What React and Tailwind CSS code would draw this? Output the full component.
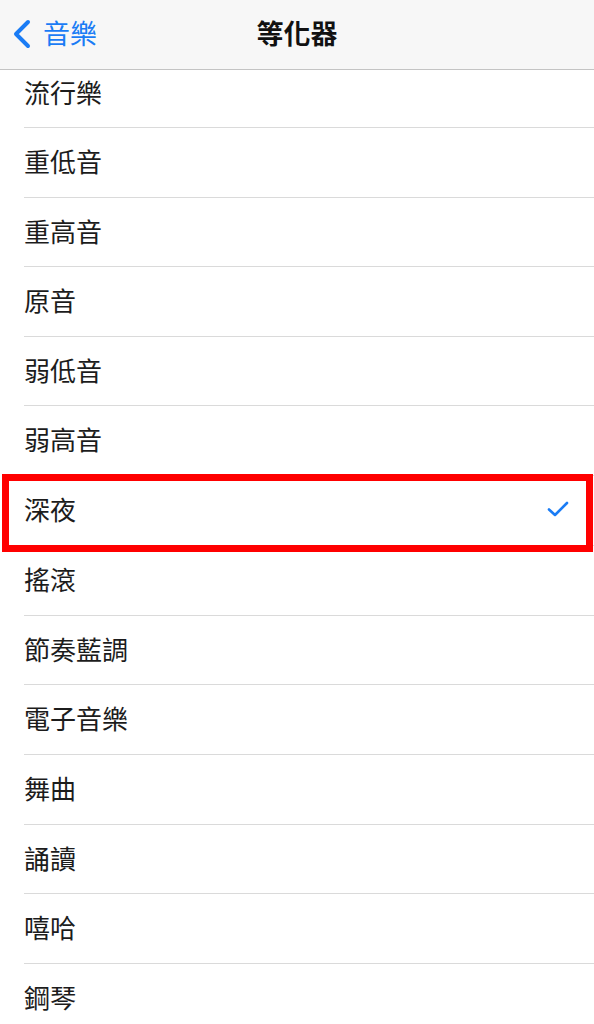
import React from 'react';

const rows = [
  { label: '流行樂', h: 'h-[58px] pb-[14px]' },
  { label: '重低音', h: 'h-[70px] pb-[3px]' },
  { label: '重高音', h: 'h-[69px] pb-[3px]' },
  { label: '原音', h: 'h-[70px] pb-[3px]' },
  { label: '弱低音', h: 'h-[69px] pb-[3px]' },
  { label: '弱高音', h: 'h-[70px] pb-[3px]' },
  { label: '深夜', h: 'h-[70px] pb-[3px]', checked: true },
  { label: '搖滾', h: 'h-[70px] pb-[3px]' },
  { label: '節奏藍調', h: 'h-[69px] pb-[3px]' },
  { label: '電子音樂', h: 'h-[70px] pb-[3px]' },
  { label: '舞曲', h: 'h-[70px] pb-[3px]' },
  { label: '誦讀', h: 'h-[69px] pb-[3px]' },
  { label: '嘻哈', h: 'h-[70px] pb-[3px]' },
  { label: '鋼琴', h: 'h-[70px] pb-[3px]' },
];

const EqualizerPage = () => {
  return (
    <div className="w-[594px] h-[1024px] overflow-hidden bg-white font-['Noto_Sans_CJK_TC','Noto_Sans',sans-serif]">
      {/* nav bar */}
      <div className="relative h-[70px] pb-[4px] flex items-center justify-center bg-[#f7f7f7] border-b border-[#c4c4c4]">
        <div className="absolute left-[11px] top-0 h-full pb-[2px] flex items-center gap-[10px] text-[#1a7cf5]">
          <svg width="22" height="30" viewBox="0 0 22 30">
            <path d="M17 3 L5 15 L17 27" fill="none" stroke="#1a7cf5" strokeWidth="4" strokeLinecap="round" strokeLinejoin="round" />
          </svg>
          <span className="text-[27px] leading-none pb-[2px]">音樂</span>
        </div>
        <span className="text-[27px] font-semibold text-[#111] leading-none">等化器</span>
      </div>

      {/* list */}
      <div className="relative">
        {rows.map((r) => (
          <div key={r.label} className={`${r.h} ml-[24px] flex items-center justify-between border-b border-[#dadada]`}>
            <span className="text-[26px] text-[#1c1c1c] leading-none">{r.label}</span>
            {r.checked && (
              <svg className="mr-[25px]" width="22" height="16" viewBox="0 0 22 16">
                <path d="M2 8.5 L8 14 L20 2" fill="none" stroke="#1a7cf5" strokeWidth="2.6" strokeLinecap="round" strokeLinejoin="round" />
              </svg>
            )}
          </div>
        ))}
        {/* highlight box */}
        <div className="absolute left-[2px] top-[404px] w-[591px] h-[78px] border-[7px] border-[#ff0000] pointer-events-none" />
      </div>
    </div>
  );
};

export default EqualizerPage;
